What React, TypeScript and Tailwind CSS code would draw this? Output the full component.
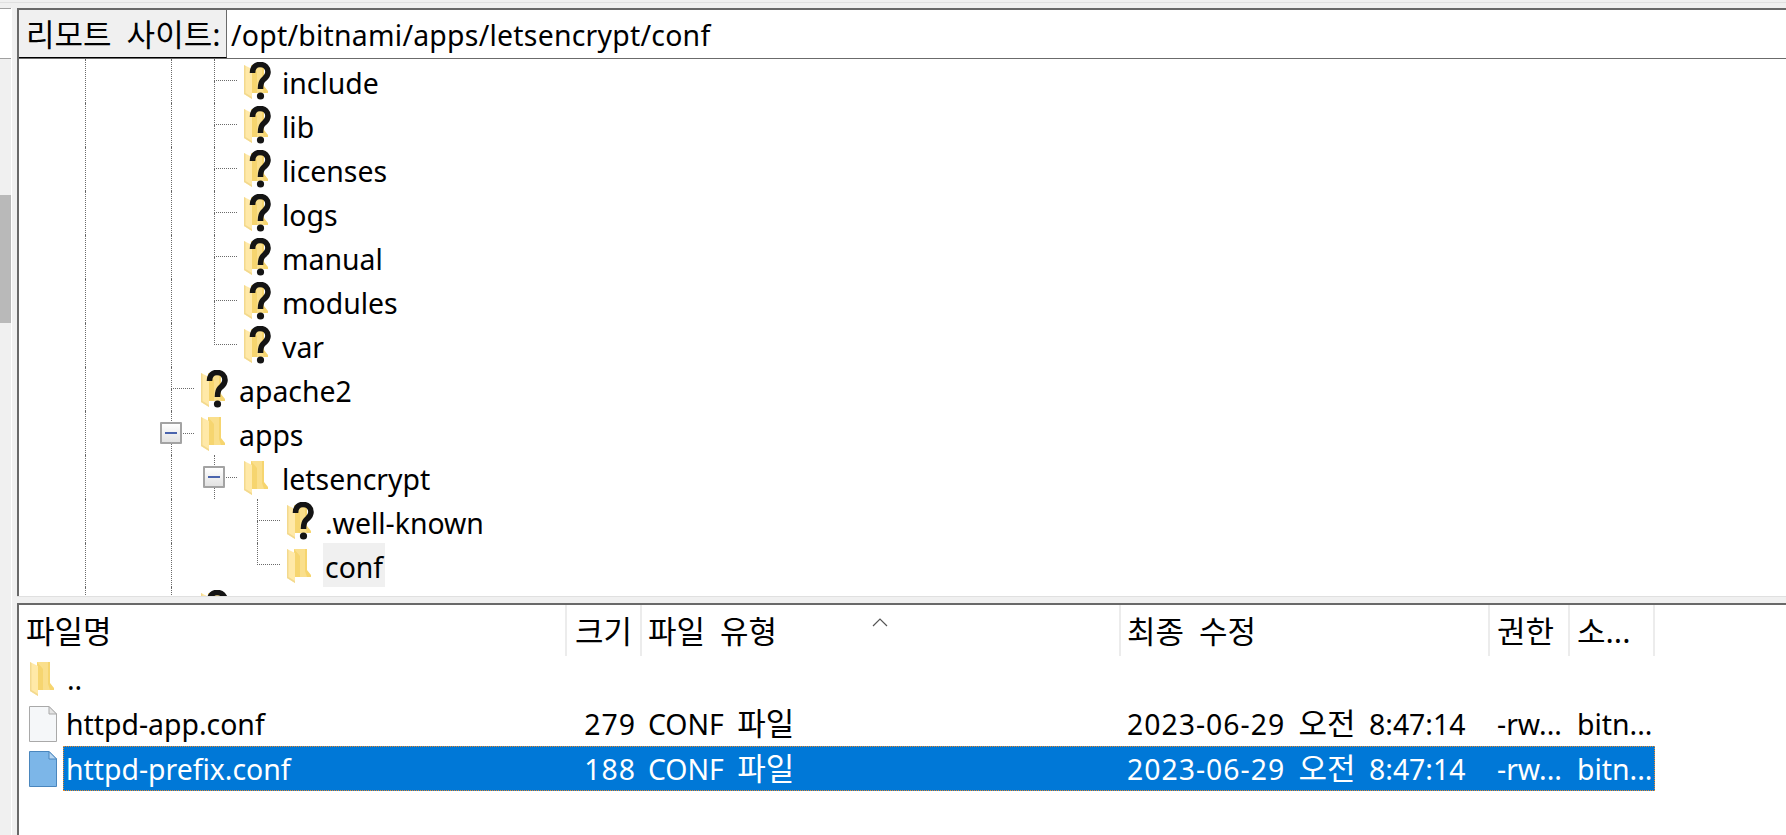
import React from "react";

type Guide = "none" | "line" | "tee" | "elbow" | "box";

const dot = "border-[#6a6a6a] border-dotted";

const K = ({ children }: { children: React.ReactNode }) => (
  <span className="text-[31px] [word-spacing:7px]">{children}</span>
);

const Folder = () => (
  <svg width="26" height="35" viewBox="0 0 26 35" className="shrink-0">
    <path d="M8 1H21V22L25 27V29H8Z" fill="#f6d56f" />
    <path d="M8 1H19V23L21 29H14V8Z" fill="#fadf8c" />
    <path d="M1 1L9 5V35L1 30Z" fill="#ffe9a8" />
    <path d="M1 1L1 30L9 35V33L2.5 29V2Z" fill="#f3d98e" />
  </svg>
);

const Unknown = () => (
  <div className="relative w-[26px] h-[35px] shrink-0">
    <Folder />
    <svg
      width="22"
      height="38"
      viewBox="0 0 22 38"
      className="absolute left-[6px] top-[-2px] blur-[0.7px]"
    >
      <path
        d="M3.5 11C3.5 5 7 2.5 11 2.5C16 2.5 19 6 19 10C19 14.5 16 16 14 18C12 20 11.5 21.5 11.5 27"
        fill="none"
        stroke="#141414"
        strokeWidth="5.6"
      />
      <circle cx="11.5" cy="34" r="3.6" fill="#141414" />
    </svg>
  </div>
);

const FileIcon = ({ blue }: { blue?: boolean }) => (
  <svg width="28" height="36" viewBox="0 0 28 36" className="shrink-0">
    <path
      d="M0.5 0.5H20L27.5 8V35.5H0.5Z"
      fill={blue ? "#7cb6e8" : "#f5f7f9"}
      stroke={blue ? "#4a86bd" : "#a9a9a9"}
    />
    <path
      d="M20 0.5V8H27.5Z"
      fill={blue ? "#b7d6f2" : "#e4e4e4"}
      stroke={blue ? "#4a86bd" : "#a9a9a9"}
    />
  </svg>
);

const Cell = ({ kind, w }: { kind: Guide; w: string }) => {
  if (kind === "none") return <div className={`${w} shrink-0`} />;
  if (kind === "line")
    return (
      <div className={`${w} shrink-0 h-full`}>
        <div className={`h-full border-l ${dot}`} />
      </div>
    );
  if (kind === "box")
    return (
      <div className={`${w} shrink-0 h-full relative`}>
        <div className={`absolute left-0 top-0 h-full border-l ${dot}`} />
        <div className="absolute left-[-11px] top-[11px] w-[22px] h-[22px] flex items-center justify-center rounded-[1px] border-2 border-[#a3a3a3] bg-gradient-to-b from-white to-[#e2e2e2]">
          <div className="w-[12px] h-[2px] bg-[#4a64ad]" />
        </div>
        <div className={`absolute left-[12px] top-[22px] w-[11px] border-t ${dot}`} />
      </div>
    );
  return (
    <div className={`${w} shrink-0 h-full flex flex-col`}>
      <div className={`h-[22px] border-l border-b ${dot}`} />
      {kind === "tee" && <div className={`flex-1 border-l ${dot}`} />}
    </div>
  );
};

type TreeRow = {
  name: string;
  guides: Guide[];
  known?: boolean;
  active?: boolean;
};

const deep: Guide[] = ["line", "line"];

const rows: TreeRow[] = [
  { name: "include", guides: [...deep, "tee"] },
  { name: "lib", guides: [...deep, "tee"] },
  { name: "licenses", guides: [...deep, "tee"] },
  { name: "logs", guides: [...deep, "tee"] },
  { name: "manual", guides: [...deep, "tee"] },
  { name: "modules", guides: [...deep, "tee"] },
  { name: "var", guides: [...deep, "elbow"] },
  { name: "apache2", guides: ["line", "tee"] },
  { name: "apps", guides: ["line", "box"], known: true },
  { name: "letsencrypt", guides: ["line", "line", "box"], known: true },
  { name: ".well-known", guides: ["line", "line", "none", "tee"] },
  { name: "conf", guides: ["line", "line", "none", "elbow"], known: true, active: true },
  { name: "", guides: ["line", "line"] },
];

const Tree = () => (
  <div className="h-[537px] overflow-hidden bg-white">
    {rows.map((r, i) => (
      <div key={i} className="h-[44px] flex items-center pl-[66px]">
        {r.guides.map((g, j) => (
          <Cell
            key={j}
            kind={g}
            w={j === r.guides.length - 1 ? "w-[23px]" : j === 0 ? "w-[86px]" : "w-[43px]"}
          />
        ))}
        <div className="w-[6px] shrink-0" />
        {r.known ? <Folder /> : <Unknown />}
        {r.name && (
          <span
            className={`ml-[11px] px-[2px] h-[44px] leading-[49px] ${
              r.active ? "bg-[#f0f0f0]" : ""
            }`}
          >
            {r.name}
          </span>
        )}
      </div>
    ))}
  </div>
);

const cols = [
  { label: "파일명", w: "w-[548px]", pl: "pl-[7px]" },
  { label: "크기", w: "w-[75px]", pl: "pl-[8px]" },
  { label: "파일 유형", w: "w-[479px]", pl: "pl-[6px]" },
  { label: "최종 수정", w: "w-[369px]", pl: "pl-[6px]" },
  { label: "권한", w: "w-[80px]", pl: "pl-[7px]" },
  { label: "소...", w: "w-[85px]", pl: "pl-[7px]" },
];

const files = [
  { name: "httpd-app.conf", size: "279", perm: "-rw...", owner: "bitn..." },
  { name: "httpd-prefix.conf", size: "188", perm: "-rw...", owner: "bitn...", selected: true },
];

const FileList = () => (
  <div className="flex-1 bg-white">
    <div className="flex h-[51px] w-[1636px]">
      {cols.map((c, i) => (
        <div
          key={i}
          className={`${c.w} relative shrink-0 h-full border-r-2 border-[#ececec] ${c.pl} leading-[53px] whitespace-nowrap`}
        >
          <K>{c.label}</K>
          {i === 2 && (
            <svg
              width="16"
              height="9"
              viewBox="0 0 16 9"
              className="absolute left-[230px] top-[13px]"
            >
              <path d="M1 8L8 1L15 8" fill="none" stroke="#555" strokeWidth="1.2" />
            </svg>
          )}
        </div>
      ))}
    </div>
    <div className="h-[45px] flex items-center pl-[10px]">
      <Folder />
      <span className="ml-[12px] leading-[54px]">..</span>
    </div>
    {files.map((f) => (
      <div key={f.name} className="h-[45px] flex items-center w-[1636px] pl-[10px]">
        <FileIcon blue={f.selected} />
        <div
          className={`ml-[6px] flex h-full flex-1 items-center leading-[48px] whitespace-nowrap border border-dotted ${
            f.selected ? "bg-[#0078d7] text-white border-[#e8892c]" : "border-transparent"
          }`}
        >
          <div className="w-[502px] pl-[2px] shrink-0">{f.name}</div>
          <div className="w-[75px] pr-[5px] text-right tracking-[1px] shrink-0">{f.size}</div>
          <div className="w-[479px] pl-[7px] shrink-0">
            CONF <K><span className="ml-[6px]">파일</span></K>
          </div>
          <div className="w-[369px] pl-[7px] shrink-0">
            <span className="tracking-[1px]">2023-06-29</span>
            <span className="mx-[6px]">
              {" "}
              <K>오전</K>{" "}
            </span>
            8:47:14
          </div>
          <div className="w-[80px] pl-[8px] shrink-0">{f.perm}</div>
          <div className="pl-[8px]">{f.owner}</div>
        </div>
      </div>
    ))}
  </div>
);

export default function App() {
  return (
    <div className="h-[835px] w-[1786px] overflow-hidden flex flex-col bg-[#f0f0f0] text-[28.4px] text-black font-['Noto_Sans','Noto_Sans_CJK_KR',sans-serif]">
      <div className="h-[3px] border-b border-[#e0e0e0] shrink-0" />
      <div className="flex flex-1 pt-[5px]">
        <div className="w-[11px] shrink-0 flex flex-col">
          <div className="h-[51px] bg-white border-y border-[#a0a0a0]" />
          <div className="h-[136px]" />
          <div className="h-[128px] bg-[#b9b9b9]" />
        </div>
        <div className="w-[1px] shrink-0 bg-white" />
        <div className="w-[5px] shrink-0" />
        <div className="flex-1 flex flex-col min-w-0">
          <div className="border-l-2 border-t-2 border-[#696969]">
            <div className="flex h-[49px] border-b border-[#6b6b6b]">
              <div className="w-[208px] shrink-0 bg-[#f0f0f0] border-r border-b border-r-[#6b6b6b] border-b-black pl-[7px] leading-[48px] whitespace-nowrap">
                <K>리모트 사이트:</K>
              </div>
              <div className="flex-1 bg-white pl-[4px] tracking-[0.25px] leading-[50px]">
                /opt/bitnami/apps/letsencrypt/conf
              </div>
            </div>
            <Tree />
          </div>
          <div className="h-[7px] shrink-0 border-t border-[#e0e0e0]" />
          <div className="flex-1 flex flex-col border-l-2 border-t-2 border-[#696969]">
            <FileList />
          </div>
        </div>
      </div>
    </div>
  );
}
